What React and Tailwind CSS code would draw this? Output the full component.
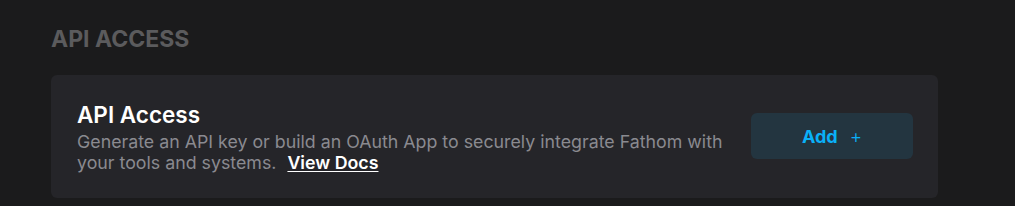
export default function App() {
  return (
    <div className="min-h-[206px] w-full bg-[#1b1b1c] px-[51px] pt-[24px] font-['Inter',sans-serif]">
      <h2 className="text-[23px] font-bold leading-[30px] text-[#5b5b5d]">
        API ACCESS
      </h2>

      <div className="mt-[21px] w-[887px] rounded-md bg-[#252529] pl-[26px] pr-[25px] pt-[24px] pb-[25px] flex items-center justify-between">
        <div className="max-w-[660px]">
          <h3 className="text-[22.5px] font-semibold leading-[32px] text-white">
            API Access
          </h3>
          <p className="text-[17.8px] leading-[21px] text-[#8a8a90]">
            Generate an API key or build an OAuth App to securely integrate Fathom with your tools and systems.{" "}
            <a href="#" className="ml-[6px] font-semibold text-white underline underline-offset-2">
              View Docs
            </a>
          </p>
        </div>

        <button className="flex h-[46px] w-[162px] items-center justify-center gap-[12px] rounded-md bg-[#233540] text-[#0ab0f8]">
          <span className="text-[18px] font-bold">Add</span>
          <span className="text-[19px] font-light leading-none">+</span>
        </button>
      </div>
    </div>
  );
}
